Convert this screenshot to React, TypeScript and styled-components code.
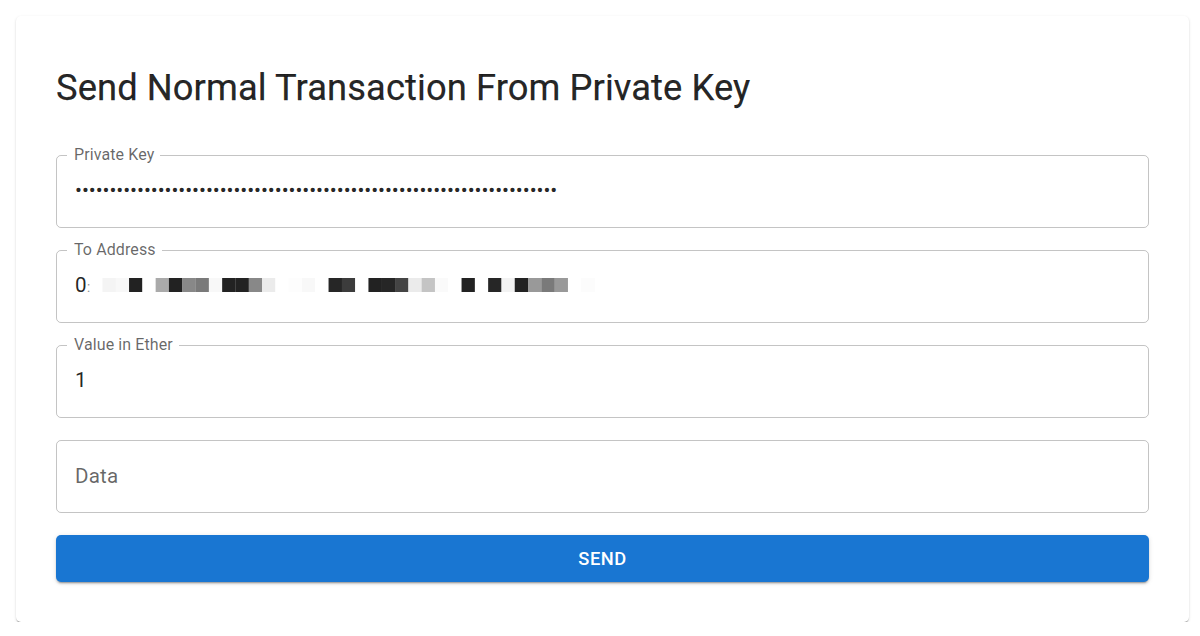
import React from "react";
import styled, { createGlobalStyle } from "styled-components";

const GlobalStyle = createGlobalStyle`
  html, body {
    margin: 0;
    padding: 0;
    background: #ffffff;
  }
  body {
    font-family: Roboto, "Helvetica Neue", Arial, sans-serif;
    color: rgba(0, 0, 0, 0.87);
  }
`;

const Card = styled.section`
  margin: 16px 11px 0 16px;
  padding: 40px;
  background: #ffffff;
  border-radius: 5px;
  box-shadow: 0px 2px 1px -1px rgba(0, 0, 0, 0.2),
    0px 1px 1px 0px rgba(0, 0, 0, 0.14), 0px 1px 3px 0px rgba(0, 0, 0, 0.12);
`;

const Title = styled.h1`
  margin: 10px 0 37px;
  font-family: Roboto, "Helvetica Neue", Arial, sans-serif;
  font-weight: 400;
  font-size: 36.3px;
  line-height: 43px;
  letter-spacing: 0.1px;
  color: rgba(0, 0, 0, 0.87);
  -webkit-text-stroke: 0.25px rgba(0, 0, 0, 0.87);
`;

const Form = styled.form`
  display: flex;
  flex-direction: column;
  gap: 13px;
`;

const Field = styled.fieldset`
  margin: 0;
  padding: 15px 18px 25px;
  min-width: 0;
  border: 1px solid rgba(0, 0, 0, 0.23);
  border-radius: 5px;
`;

const Legend = styled.legend<{ $empty?: boolean }>`
  height: 18px;
  margin-left: -8px;
  padding: ${(p) => (p.$empty ? "0" : "0 6px 0 7px")};
  font-size: 16px;
  line-height: 18px;
  letter-spacing: 0.1px;
  color: rgba(0, 0, 0, 0.6);
  white-space: nowrap;
`;

const Value = styled.div<{ $muted?: boolean }>`
  box-sizing: border-box;
  height: 23px;
  padding-top: ${(p) => (p.$muted ? "2px" : "0")};
  font-size: 20.6px;
  line-height: ${(p) => (p.$muted ? "21px" : "23px")};
  letter-spacing: 0.15px;
  color: ${(p) => (p.$muted ? "rgba(0, 0, 0, 0.6)" : "rgba(0, 0, 0, 0.87)")};
  white-space: nowrap;
`;

const Masked = styled(Value)`
  letter-spacing: -0.06px;
  overflow: hidden;
`;

const Colon = styled.span`
  display: inline-block;
  width: 5px;
  font-size: 15px;
  color: rgba(0, 0, 0, 0.45);
`;

const Mosaic = styled.svg`
  display: inline-block;
  margin-left: 10px;
  vertical-align: baseline;
`;

const SendButton = styled.button`
  margin-top: 9px;
  height: 47px;
  border: 0;
  border-radius: 5px;
  background: #1976d2;
  color: #ffffff;
  font-family: Roboto, "Helvetica Neue", Arial, sans-serif;
  font-weight: 500;
  font-size: 18.3px;
  letter-spacing: 0.5px;
  text-transform: uppercase;
  cursor: pointer;
  box-shadow: 0px 3px 1px -2px rgba(0, 0, 0, 0.2),
    0px 2px 2px 0px rgba(0, 0, 0, 0.14), 0px 1px 5px 0px rgba(0, 0, 0, 0.12);
`;

// pixelated cells that hide the middle of the address
const cells = [
  "#f4f4f4", "#f8f8f8", "#222222", "#ffffff", "#aaaaaa", "#222222", "#888888",
  "#7a7a7a", "#f8f8f8", "#222222", "#222222", "#888888", "#ebebeb", "#ffffff",
  "#fdfdfd", "#f8f8f8", "#ffffff", "#262626", "#3c3c3c", "#ffffff", "#222222",
  "#262626", "#444444", "#ebebeb", "#c4c4c4", "#fafafa", "#ffffff", "#222222",
  "#ffffff", "#262626", "#f2f2f2", "#222222", "#999999", "#7a7a7a", "#999999",
  "#ffffff", "#fcfcfc",
];
const CELL = 13.3;

const AddressMosaic = () => (
  <Mosaic
    width={Math.ceil(cells.length * CELL)}
    height={14}
    viewBox={`0 0 ${cells.length * CELL} 14`}
  >
    {cells.map((c, i) => (
      <rect key={i} x={i * CELL} y={0} width={CELL + 0.2} height={14} fill={c} />
    ))}
  </Mosaic>
);

export default function App() {
  const dots = "\u2022".repeat(70);
  return (
    <>
      <GlobalStyle />
      <Card>
        <Title>Send Normal Transaction From Private Key</Title>
        <Form onSubmit={(e) => e.preventDefault()}>
          <Field>
            <Legend>Private Key</Legend>
            <Masked>{dots}</Masked>
          </Field>
          <Field>
            <Legend>To Address</Legend>
            <Value>
              0<Colon>:</Colon>
              <AddressMosaic />
            </Value>
          </Field>
          <Field>
            <Legend>Value in Ether</Legend>
            <Value>1</Value>
          </Field>
          <Field>
            <Legend $empty />
            <Value $muted>Data</Value>
          </Field>
          <SendButton type="submit">Send</SendButton>
        </Form>
      </Card>
    </>
  );
}
